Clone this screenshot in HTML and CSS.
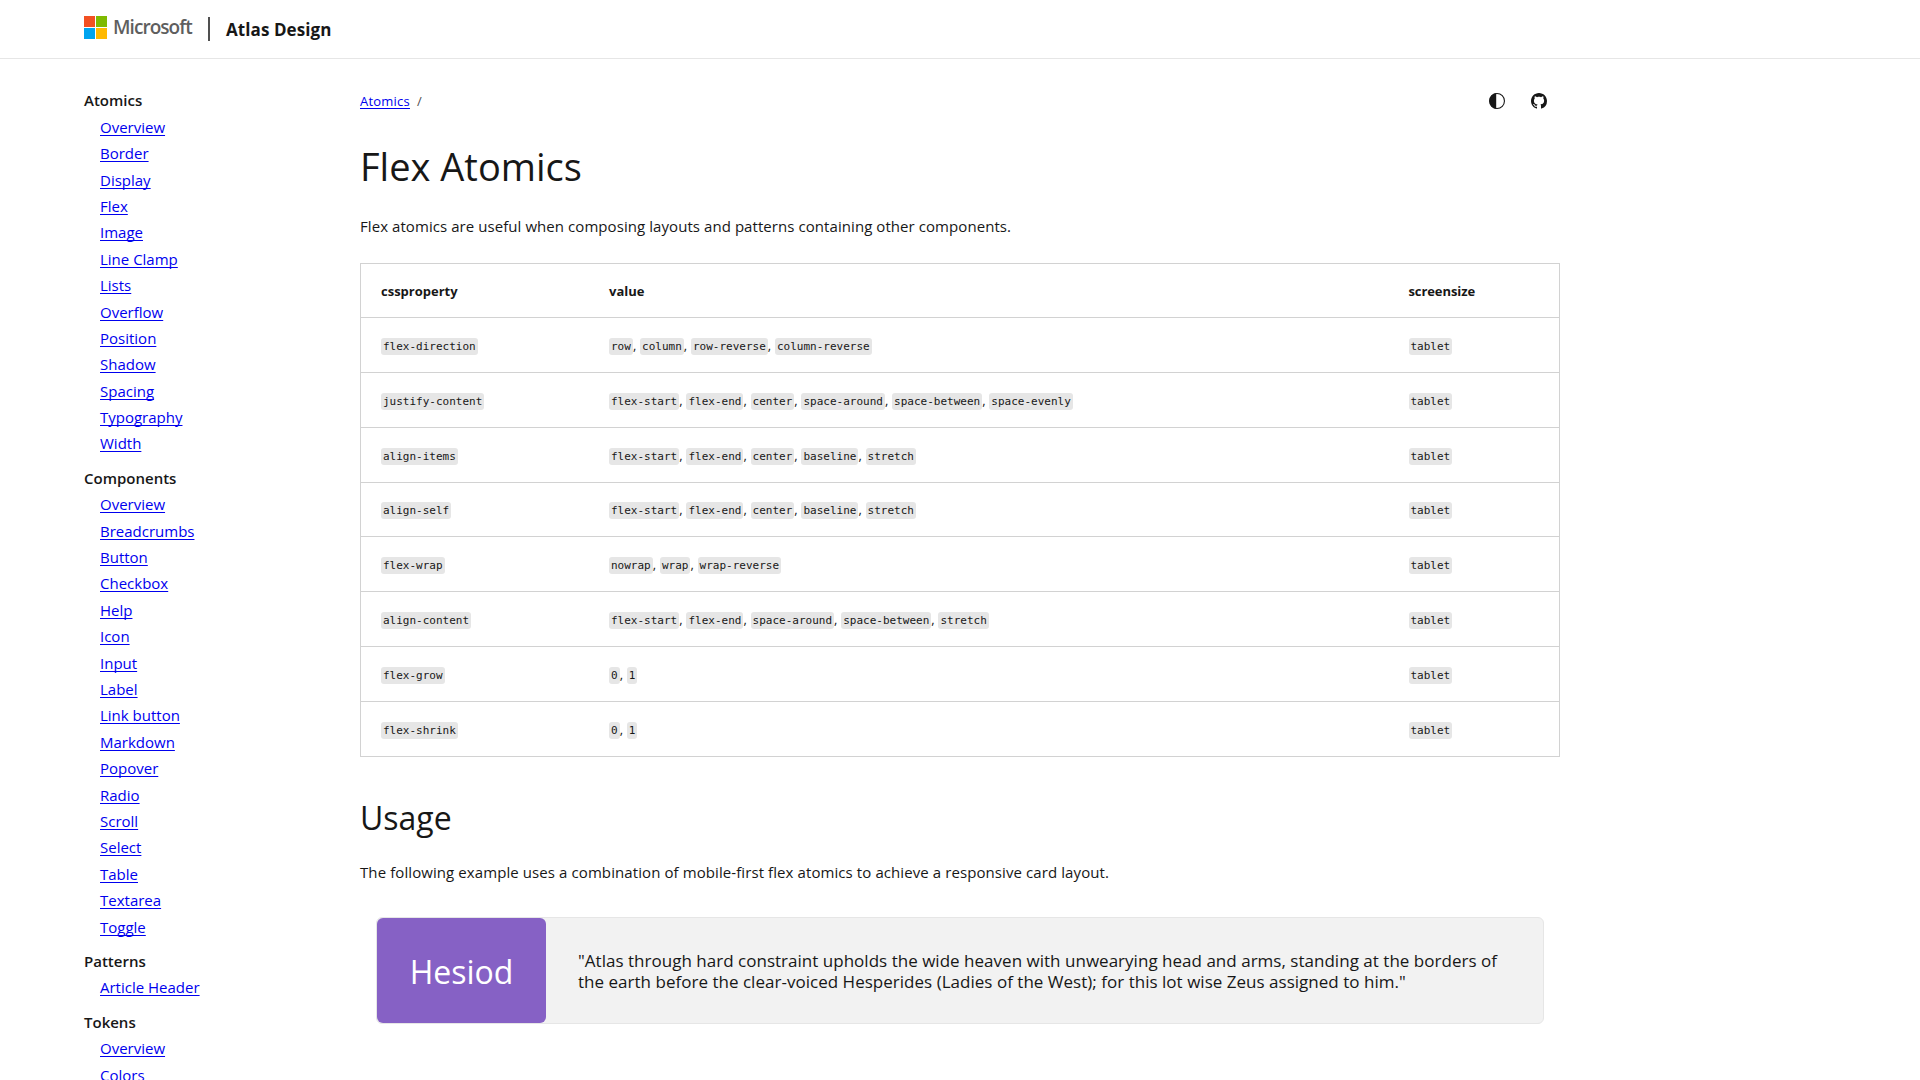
FILE: index.html
```
<!DOCTYPE html>
<html lang="en">
<head>
<meta charset="utf-8">
<title>Flex Atomics</title>
<link rel="stylesheet" href="styles.css">
</head>
<body>
<header class="site-header">
  <svg class="logo-mark" width="23" height="23" viewBox="0 0 23 23" aria-hidden="true"><path fill="#f25022" d="M0 0h11v11H0z"/><path fill="#7fba00" d="M12 0h11v11H12z"/><path fill="#00a4ef" d="M0 12h11v11H0z"/><path fill="#ffb900" d="M12 12h11v11H12z"/></svg>
  <span class="logo-name">Microsoft</span>
  <span class="header-rule"></span>
  <span class="site-name">Atlas Design</span>
</header>
<div class="layout">
  <nav class="sidebar">
    <section><h2>Atomics</h2><ul>
      <li><a href="#">Overview</a></li><li><a href="#">Border</a></li><li><a href="#">Display</a></li><li><a href="#">Flex</a></li><li><a href="#">Image</a></li><li><a href="#">Line Clamp</a></li><li><a href="#">Lists</a></li><li><a href="#">Overflow</a></li><li><a href="#">Position</a></li><li><a href="#">Shadow</a></li><li><a href="#">Spacing</a></li><li><a href="#">Typography</a></li><li><a href="#">Width</a></li>
    </ul></section>
    <section><h2>Components</h2><ul>
      <li><a href="#">Overview</a></li><li><a href="#">Breadcrumbs</a></li><li><a href="#">Button</a></li><li><a href="#">Checkbox</a></li><li><a href="#">Help</a></li><li><a href="#">Icon</a></li><li><a href="#">Input</a></li><li><a href="#">Label</a></li><li><a href="#">Link button</a></li><li><a href="#">Markdown</a></li><li><a href="#">Popover</a></li><li><a href="#">Radio</a></li><li><a href="#">Scroll</a></li><li><a href="#">Select</a></li><li><a href="#">Table</a></li><li><a href="#">Textarea</a></li><li><a href="#">Toggle</a></li>
    </ul></section>
    <section><h2>Patterns</h2><ul>
      <li><a href="#">Article Header</a></li>
    </ul></section>
    <section><h2>Tokens</h2><ul>
      <li><a href="#">Overview</a></li><li><a href="#">Colors</a></li>
    </ul></section>
  </nav>
  <main class="content">
    <div class="toolbar">
      <div class="breadcrumbs"><a href="#">Atomics</a><span class="slash">/</span></div>
      <div class="actions">
        <svg width="16" height="16" viewBox="0 0 16 16" aria-label="Theme"><circle cx="8" cy="8" r="7.45" fill="none" stroke="#171717" stroke-width="1.1"/><path fill="#171717" d="M7.2 0.1V15.9A8 8 0 0 1 7.2 0.1z"/></svg>
        <svg width="16" height="16" viewBox="0 0 16 16" aria-label="GitHub"><path fill="#171717" d="M8 0C3.58 0 0 3.58 0 8c0 3.54 2.29 6.53 5.47 7.59.4.07.55-.17.55-.38 0-.19-.01-.82-.01-1.49-2.01.37-2.53-.49-2.69-.94-.09-.23-.48-.94-.82-1.13-.28-.15-.68-.52-.01-.53.63-.01 1.08.58 1.23.82.72 1.21 1.87.87 2.33.66.07-.52.28-.87.51-1.07-1.78-.2-3.64-.89-3.64-3.95 0-.87.31-1.59.82-2.15-.08-.2-.36-1.02.08-2.12 0 0 .67-.21 2.2.82.64-.18 1.32-.27 2-.27s1.36.09 2 .27c1.53-1.04 2.2-.82 2.2-.82.44 1.1.16 1.92.08 2.12.51.56.82 1.27.82 2.15 0 3.07-1.87 3.75-3.65 3.95.29.25.54.73.54 1.48 0 1.07-.01 1.93-.01 2.2 0 .21.15.46.55.38A8.01 8.01 0 0 0 16 8c0-4.42-3.58-8-8-8z"/></svg>
      </div>
    </div>
    <h1>Flex Atomics</h1>
    <p class="intro">Flex atomics are useful when composing layouts and patterns containing other components.</p>
    <table class="props">
      <thead><tr><th class="c1">cssproperty</th><th class="c2">value</th><th class="c3">screensize</th></tr></thead>
      <tbody>
      <tr><td><code>flex-direction</code></td><td><code>row</code>, <code>column</code>, <code>row-reverse</code>, <code>column-reverse</code></td><td><code>tablet</code></td></tr>
      <tr><td><code>justify-content</code></td><td><code>flex-start</code>, <code>flex-end</code>, <code>center</code>, <code>space-around</code>, <code>space-between</code>, <code>space-evenly</code></td><td><code>tablet</code></td></tr>
      <tr><td><code>align-items</code></td><td><code>flex-start</code>, <code>flex-end</code>, <code>center</code>, <code>baseline</code>, <code>stretch</code></td><td><code>tablet</code></td></tr>
      <tr><td><code>align-self</code></td><td><code>flex-start</code>, <code>flex-end</code>, <code>center</code>, <code>baseline</code>, <code>stretch</code></td><td><code>tablet</code></td></tr>
      <tr><td><code>flex-wrap</code></td><td><code>nowrap</code>, <code>wrap</code>, <code>wrap-reverse</code></td><td><code>tablet</code></td></tr>
      <tr><td><code>align-content</code></td><td><code>flex-start</code>, <code>flex-end</code>, <code>space-around</code>, <code>space-between</code>, <code>stretch</code></td><td><code>tablet</code></td></tr>
      <tr><td><code>flex-grow</code></td><td><code>0</code>, <code>1</code></td><td><code>tablet</code></td></tr>
      <tr><td><code>flex-shrink</code></td><td><code>0</code>, <code>1</code></td><td><code>tablet</code></td></tr>
      </tbody>
    </table>
    <h2 class="usage">Usage</h2>
    <p class="example">The following example uses a combination of mobile-first flex atomics to achieve a responsive card layout.</p>
    <div class="card">
      <div class="card-name"><span>Hesiod</span></div>
      <div class="card-quote">"Atlas through hard constraint upholds the wide heaven with unwearying head and arms, standing at the borders of<br>the earth before the clear-voiced Hesperides (Ladies of the West); for this lot wise Zeus assigned to him."</div>
    </div>
  </main>
</div>
</body>
</html>
```
FILE: styles.css
```
* { box-sizing: border-box; margin: 0; padding: 0; }
body {
  background: #fff;
  color: #171717;
  font-family: "Open Sans", "Noto Sans", sans-serif;
  font-size: 15px;
  height: 1080px;
  overflow: hidden;
}
a { color: #0000ee; text-decoration: underline; text-decoration-thickness: 1px; text-underline-offset: 2px; text-decoration-skip-ink: none; }
.site-header { display: flex; height: 59px; padding-left: 84px; border-bottom: 1px solid #e6e6e6; }
.logo-mark { margin-top: 16px; }
.logo-name { width: 78px; margin: 14px 0 0 6px; color: #5e5e5e; font-size: 19px; font-weight: 600; letter-spacing: -0.95px; line-height: 26px; white-space: nowrap; }
.header-rule { width: 2px; height: 24px; margin: 17px 0 0 17px; background: #505050; }
.site-name { margin: 17px 0 0 16px; font-size: 17px; font-weight: 700; letter-spacing: 0.08px; line-height: 26px; white-space: nowrap; }
.layout { display: flex; padding-left: 84px; }
.sidebar { width: 276px; padding-top: 28.4px; }
.sidebar section { margin-bottom: 8px; }
.sidebar h2 { font-size: 15px; font-weight: 600; line-height: 26.4px; }
.sidebar ul { padding-left: 16px; list-style: none; }
.sidebar li { height: 26.4px; line-height: 26.4px; }
.content { width: 1200px; }
.toolbar { display: flex; justify-content: space-between; height: 50px; padding: 34px 13px 0 0; }
.breadcrumbs { font-size: 13px; letter-spacing: 0.22px; line-height: 16px; }
.slash { margin-left: 7px; color: #505050; }
.actions { display: flex; gap: 26px; }
h1 { margin-top: 29px; font-size: 38px; font-weight: 400; line-height: 56px; }
.intro { margin-top: 20px; letter-spacing: 0.067px; line-height: 24px; }
.props { width: 1200px; margin-top: 25px; border-collapse: collapse; table-layout: fixed; border: 1px solid #d2d2d2; }
.props th { height: 54px; padding: 0 20px; font-size: 13px; text-align: left; font-weight: 700; }
.props td { height: 54.85px; padding: 0 20px; border-top: 1px solid #d2d2d2; font-size: 13px; word-spacing: 0.4px; }
.props .c1 { width: 228.5px; }
.props .c3 { width: 171px; letter-spacing: -0.09px; }
code { padding: 2px; border-radius: 3px; background: #e6e6e6; font-family: "DejaVu Sans Mono", monospace; font-size: 11px; }
.usage { margin-top: 38px; font-size: 32px; font-weight: 400; line-height: 46px; }
.example { margin-top: 19px; letter-spacing: 0.089px; line-height: 24px; }
.card { display: flex; height: 107px; margin: 33px 16px 0; border: 1px solid #e6e6e6; border-radius: 6px; background: #f2f2f2; }
.card-name { display: flex; align-items: center; justify-content: center; width: 169px; padding-top: 2px; border-radius: 6px; background: #8661c5; color: #fff; font-size: 32px; }
.card-quote { padding: 32px 0 0 32px; font-size: 17px; letter-spacing: 0.02px; line-height: 21px; white-space: nowrap; }
```
